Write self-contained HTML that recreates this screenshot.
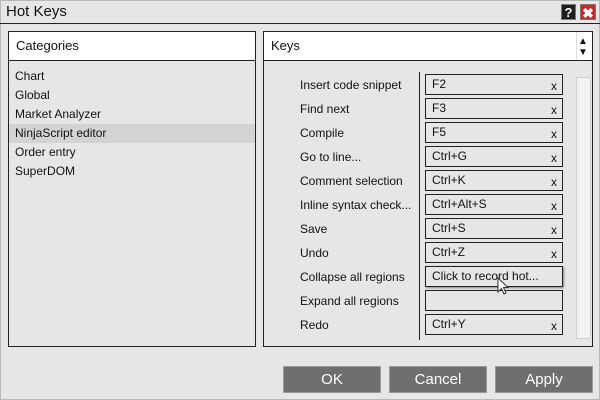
<!DOCTYPE html>
<html><head><style>
*{margin:0;padding:0;box-sizing:border-box}
body{width:600px;height:400px;background:#e6e6e6;font-family:"Liberation Sans",sans-serif;font-size:12px;color:#111;position:relative;overflow:hidden;box-shadow:inset 0 0 0 1px #b8b8b8}
.a{position:absolute}
.title{left:6px;top:3px;font-size:15px}
.line{left:0;top:23px;width:600px;height:1px;background:#222}
.help{left:561px;top:4px;width:15px;height:16px;background:#1e1e1e;color:#fff;font-weight:bold;font-size:13px;text-align:center;line-height:16px;border:1px solid #777}
.close{left:580px;top:4px;width:16px;height:16px;background:#c8262b;color:#fff;font-weight:bold;font-size:14px;text-align:center;line-height:16px;border:1px solid #777}
.panel{border:1px solid #222;background:#e6e6e6}
.hdr{background:#fff;border-bottom:1px solid #222;height:29px;line-height:28px;padding-left:7px;font-size:13px}
.cat{left:15px;font-size:12px}
.lbl{left:300px;font-size:12px}
.box{left:425px;width:138px;height:21px;border:1px solid #222;background:#e6e6e6;padding-left:6px;line-height:19px}
.box span{position:absolute;right:5px;top:2px}
.btn{top:366px;width:98px;height:27px;background:#6f6f6f;border:1px solid #999;color:#fff;font-size:15px;text-align:center;line-height:25px}
</style></head><body>
<div class="a title">Hot Keys</div>
<div class="a line"></div>
<div class="a help">?</div>
<div class="a close">✖</div>

<div class="a panel" style="left:8px;top:31px;width:248px;height:316px">
<div class="hdr">Categories</div>
<div class="a" style="left:0;top:92px;width:246px;height:19px;background:#d3d3d3"></div>
</div>
<div class="a cat" style="top:69px">Chart</div>
<div class="a cat" style="top:88px">Global</div>
<div class="a cat" style="top:107px">Market Analyzer</div>
<div class="a cat" style="top:126px">NinjaScript editor</div>
<div class="a cat" style="top:145px">Order entry</div>
<div class="a cat" style="top:164px">SuperDOM</div>

<div class="a panel" style="left:263px;top:31px;width:330px;height:316px">
<div class="hdr">Keys</div>
<div class="a" style="left:312px;top:0;width:1px;height:28px;background:#ddd"></div>
<div class="a" style="left:314px;top:4px;font-size:10px">▲</div>
<div class="a" style="left:314px;top:15px;font-size:10px">▼</div>
<div class="a" style="left:312px;top:45px;width:15px;height:262px;background:#f2f2f2;border:1px solid #d0d0d0"></div>
<div class="a" style="left:155px;top:40px;width:1px;height:268px;background:#222"></div>
</div>

<div class="a lbl" style="top:78px">Insert code snippet</div>
<div class="a lbl" style="top:102px">Find next</div>
<div class="a lbl" style="top:126px">Compile</div>
<div class="a lbl" style="top:150px">Go to line...</div>
<div class="a lbl" style="top:174px">Comment selection</div>
<div class="a lbl" style="top:198px">Inline syntax check...</div>
<div class="a lbl" style="top:222px">Save</div>
<div class="a lbl" style="top:246px">Undo</div>
<div class="a lbl" style="top:270px">Collapse all regions</div>
<div class="a lbl" style="top:294px">Expand all regions</div>
<div class="a lbl" style="top:318px">Redo</div>

<div class="a box" style="top:74px">F2<span>x</span></div>
<div class="a box" style="top:98px">F3<span>x</span></div>
<div class="a box" style="top:122px">F5<span>x</span></div>
<div class="a box" style="top:146px">Ctrl+G<span>x</span></div>
<div class="a box" style="top:170px">Ctrl+K<span>x</span></div>
<div class="a box" style="top:194px">Ctrl+Alt+S<span>x</span></div>
<div class="a box" style="top:218px">Ctrl+S<span>x</span></div>
<div class="a box" style="top:242px">Ctrl+Z<span>x</span></div>
<div class="a box" style="top:266px;box-shadow:1px 1px 2px #888">Click to record hot...</div>
<div class="a box" style="top:290px"></div>
<div class="a box" style="top:314px">Ctrl+Y<span>x</span></div>
<svg class="a" style="left:497px;top:277px" width="14" height="20"><path d="M1 1 L1 15 L4.5 11.5 L7 17 L9 16 L6.5 10.5 L11 10.5 Z" fill="#fff" stroke="#333" stroke-width="1"/></svg>

<div class="a btn" style="left:283px">OK</div>
<div class="a btn" style="left:389px">Cancel</div>
<div class="a btn" style="left:495px">Apply</div>
</body></html>
